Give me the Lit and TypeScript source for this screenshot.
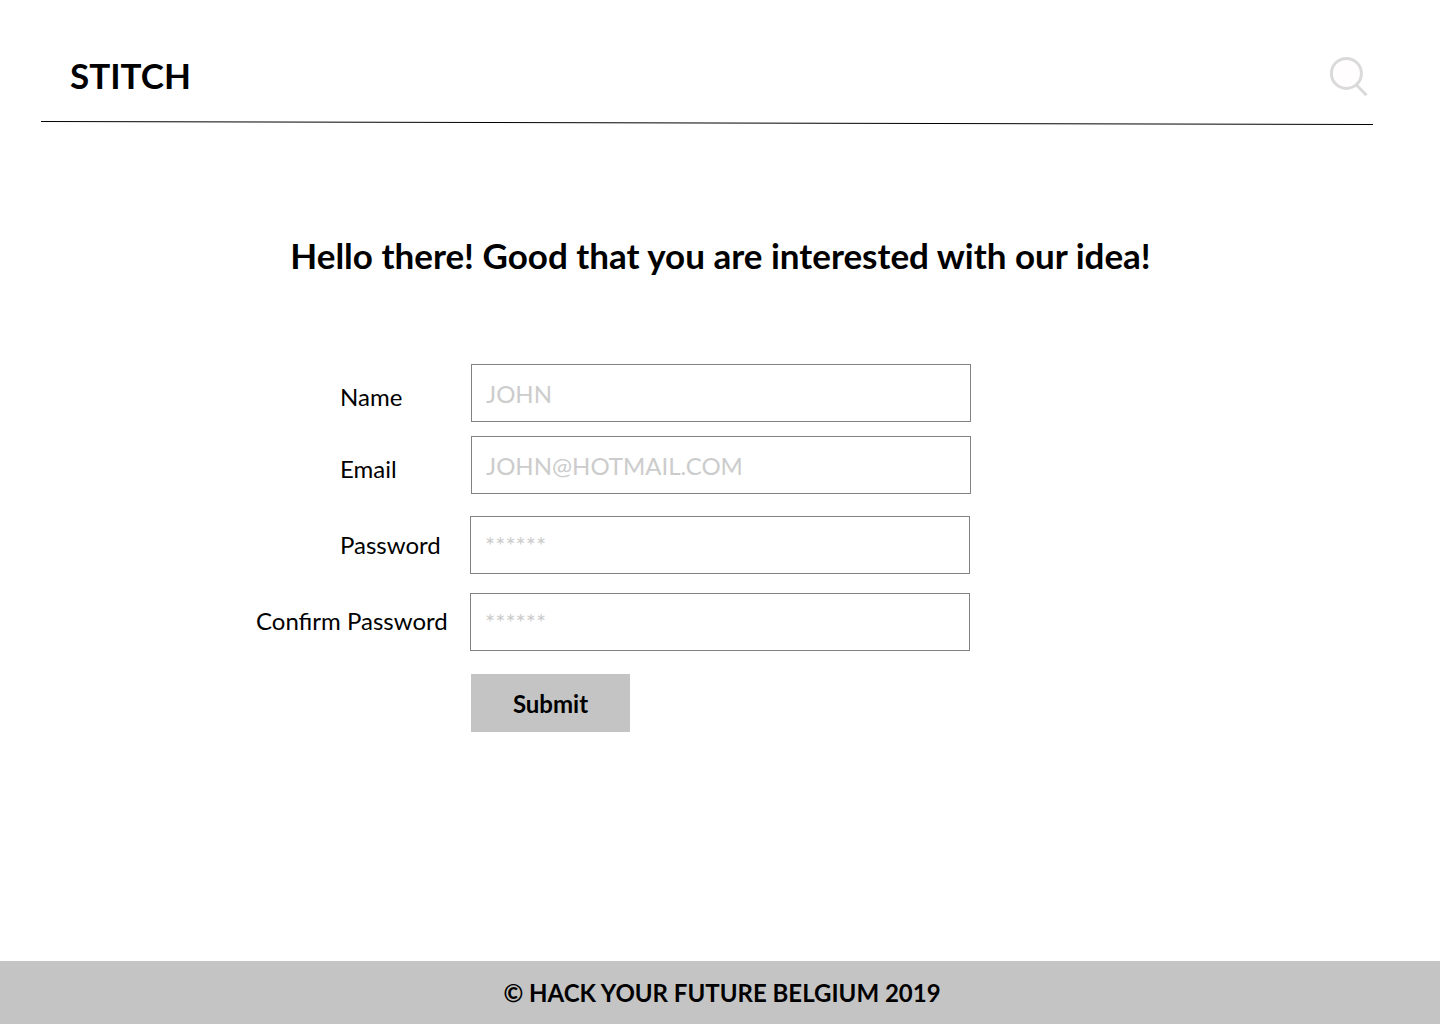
import { LitElement, html, css } from "lit";
import { customElement } from "lit/decorators.js";

interface Field { id: string; label: string; hint: string; }

const FIELDS: Field[] = [
  { id: "name", label: "Name", hint: "JOHN" },
  { id: "email", label: "Email", hint: "JOHN@HOTMAIL.COM" },
  { id: "password", label: "Password", hint: "******" },
  { id: "confirm", label: "Confirm Password", hint: "******" },
];

@customElement("app-root")
export class AppRoot extends LitElement {
  static styles = css`
    :host { display: flex; flex-direction: column; height: 1024px; background: #fff; color: #000;
      font-family: Lato, "Liberation Sans", sans-serif; font-size: 24px; line-height: 29px; overflow: hidden; }
    * { box-sizing: border-box; }
    header { display: flex; justify-content: space-between; height: 121px; padding: 54px 71px 0 70px; flex: none; }
    .logo { font-size: 35px; line-height: 43px; font-weight: 700; }
    .search { display: block; margin-top: 2px; width: 40px; height: 42px; }
    .rule { display: block; width: 1332px; height: 4px; margin-left: 41px; flex: none; }
    h1 { margin: 109px 0 0; padding-left: 1px; text-align: center; font-size: 35px; line-height: 43px; font-weight: 700; }
    form { margin: 87px 0 0; flex: 1; }
    .row { display: grid; grid-template-columns: 471px 500px; height: 58px; }
    .row.email { margin-top: 14px; }
    .row.password { margin-top: 22px; grid-template-columns: 470px 500px; }
    .row.confirm { margin-top: 19px; grid-template-columns: 470px 500px; }
    label { padding: 18px 0 0 340px; white-space: nowrap; }
    .password label { padding-top: 14px; }
    .confirm label { padding: 13px 0 0 256px; }
    input { font: inherit; width: 500px; height: 58px; border: 1px solid #828282; border-radius: 0; margin: 0; padding: 0 14px; background: #fff; outline: none; }
    input::placeholder { color: #cccccc; opacity: 1; }
    .password input, .confirm input { padding: 0 14px 1px; }
    button { display: block; margin: 23px 0 0 471px; width: 159px; height: 58px; border: 0; padding: 1px 0 0; background: #c4c4c4; font: inherit; font-weight: 700; color: #000; }
    footer { flex: none; height: 63px; background: #c4c4c4; text-align: center; font-weight: 700; padding: 17px 0 0 4px; }
  `;

  render() {
    return html`
      <header>
        <div class="logo">STITCH</div>
        <svg class="search" viewBox="0 0 40 42" fill="none" stroke="#dadada" stroke-width="3">
          <circle cx="17.4" cy="17.4" r="15" fill="#fffdfe" /><path d="M27 28.5L37.5 39.2" />
        </svg>
      </header>
      <svg class="rule" viewBox="0 0 1332 4"><path d="M0 .5L1332 3.5" stroke="#000" /></svg>
      <h1>Hello there! Good that you are interested with our idea!</h1>
      <form @submit=${(e: Event) => e.preventDefault()}>
        ${FIELDS.map((f) => html`<div class="row ${f.id}">
          <label for=${f.id}>${f.label}</label><input id=${f.id} placeholder=${f.hint} />
        </div>`)}
        <button>Submit</button>
      </form>
      <footer>© HACK YOUR FUTURE BELGIUM 2019</footer>
    `;
  }
}
